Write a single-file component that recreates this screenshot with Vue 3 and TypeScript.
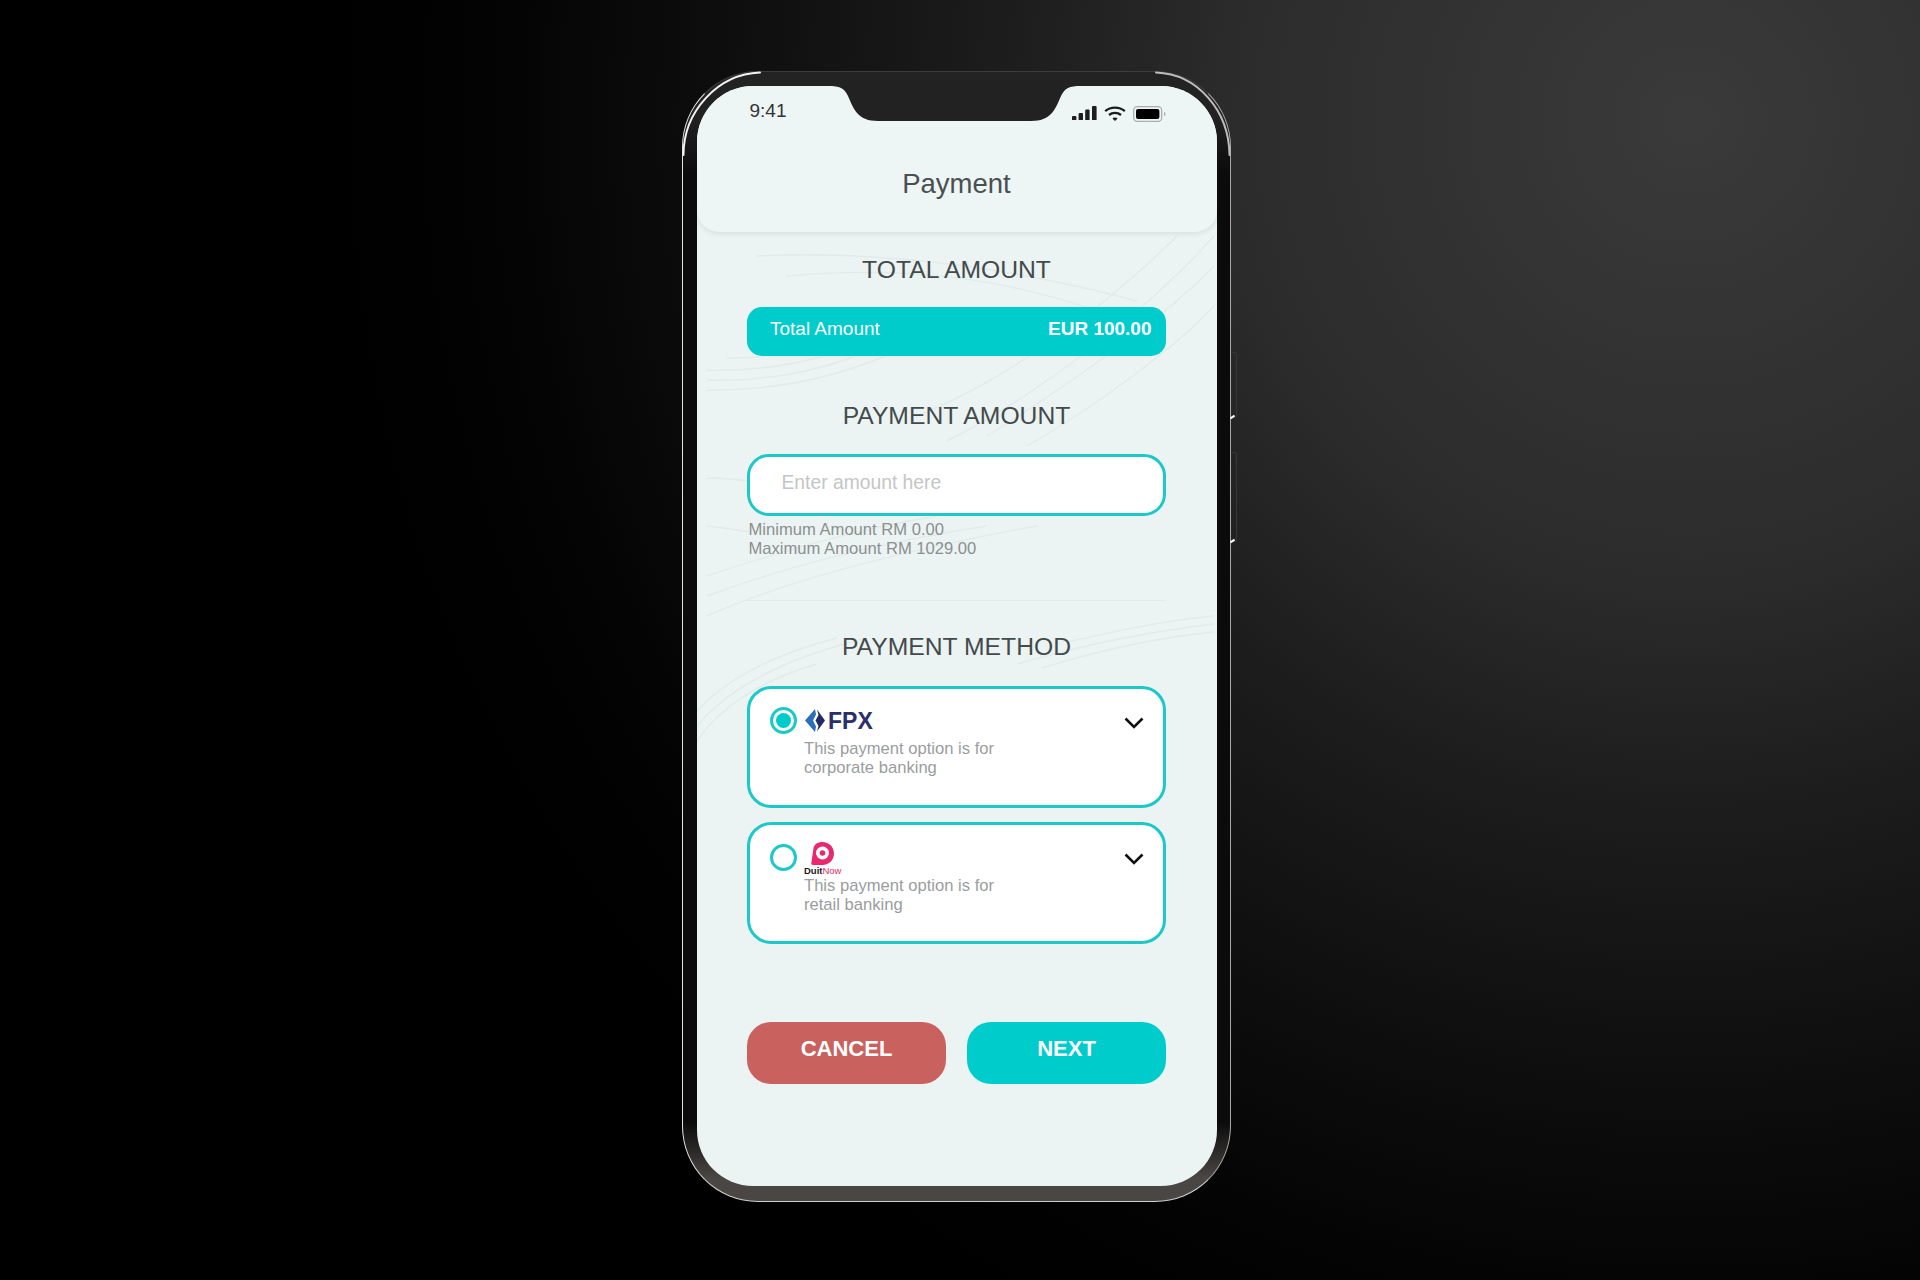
<script setup lang="ts">
interface Method { id: string; lines: string[]; selected: boolean }
const methods: Method[] = [
  { id: 'fpx', lines: ['This payment option is for', 'corporate banking'], selected: true },
  { id: 'duitnow', lines: ['This payment option is for', 'retail banking'], selected: false },
]
</script>

<template>
  <div class="page">
    <div class="phone">
      <span class="side side-a"></span>
      <span class="side side-b"></span>
      <svg class="shine" width="549" height="1131" viewBox="0 0 549 1131" fill="none" stroke-linecap="round">
        <path d="M1.500 84C1.500 40 36 3 78 1.500" stroke="#f2f2f2" stroke-width="2" />
        <path d="M474 1.500C516 3 547 40 547.500 84" stroke="#bdbdbd" stroke-width="2" />
      </svg>
      <div class="screen">
        <svg class="waves" viewBox="0 0 520 1100" fill="none" stroke="#e1ebea" stroke-width="1.4">
          <path d="M10 304C80 305 150 290 215 258" />
          <path d="M10 294C80 296 140 282 200 252" />
          <path d="M10 284C70 286 130 274 185 248" />
          <path d="M30 272C80 272 120 264 165 245" />
          <path d="M250 355C340 310 450 225 517 150" />
          <path d="M290 350C370 300 470 230 517 180" />
          <path d="M220 330C320 290 420 210 480 150" />
          <path d="M330 360C400 320 480 260 517 220" />
          <path d="M10 530C100 490 230 460 340 440" />
          <path d="M10 510C90 480 190 455 290 440" />
          <path d="M10 490C70 470 150 445 240 430" />
          <path d="M517 538C460 545 400 555 320 578" />
          <path d="M517 546C460 552 410 562 345 582" />
          <path d="M517 530C470 534 420 545 370 556" />
          <path d="M0 640C28 606 80 574 170 552" />
          <path d="M0 625C28 595 70 570 140 552" />
          <path d="M0 655C20 625 60 595 120 578" />
          <path d="M10 392C30 392 40 394 52 395" />
          <path d="M10 440C30 442 40 444 52 446" />
          <path d="M60 170C160 165 290 175 440 215" />
          <path d="M90 190C200 180 300 190 400 225" />
        </svg>

        <header class="head">
          <div class="status">
            <span class="clock">9:41</span>
            <div class="status-icons">
              <svg width="25" height="14" viewBox="0 0 25 14" fill="#1d1d1d">
                <rect x="0" y="10" width="4.4" height="4.4" rx="1" />
                <rect x="6.6" y="7" width="4.4" height="7.4" rx="1" />
                <rect x="13.2" y="3.6" width="4.4" height="10.8" rx="1" />
                <rect x="20" y="0" width="4.6" height="14.4" rx="1" />
              </svg>
              <svg width="22" height="15" viewBox="0 0 22 15" fill="none" stroke="#1d1d1d" stroke-width="2.3">
                <path d="M1.2 5.2C6.6 0.4 15.4 0.4 20.8 5.2" />
                <path d="M5 9C8.4 6.2 13.6 6.2 17 9" />
                <path d="M8.4 12.4L11 15L13.6 12.4C12.2 11.2 9.8 11.2 8.4 12.4Z" fill="#1d1d1d" stroke="none" />
              </svg>
              <svg width="33" height="16" viewBox="0 0 33 16">
                <rect x="0.7" y="0.7" width="28" height="14.6" rx="3.5" fill="none" stroke="#a9aeae" stroke-width="1.3" />
                <rect x="3" y="3" width="23.4" height="10" rx="2" fill="#000" />
                <path d="M31 6V10C32 9.600 32.500 8.800 32.500 8C32.500 7.200 32 6.400 31 6Z" fill="#a9aeae" />
              </svg>
            </div>
          </div>
          <h1 class="title">Payment</h1>
        </header>
        <svg class="notch" width="253" height="35" viewBox="0 0 253 35">
          <path d="M0 0C12 0 16 2 20 10C26 24 30 35 50 35H203C223 35 227 24 233 10C237 2 241 0 253 0Z" fill="#222" />
        </svg>

        <main class="body">
          <h2 class="label first">TOTAL AMOUNT</h2>
          <div class="total">
            <span>Total Amount</span>
            <strong>EUR 100.00</strong>
          </div>

          <h2 class="label second">PAYMENT AMOUNT</h2>
          <input class="amount" type="text" placeholder="Enter amount here" />
          <p class="hint">Minimum Amount RM 0.00<br />Maximum Amount RM 1029.00</p>
          <hr class="rule" />

          <h2 class="label third">PAYMENT METHOD</h2>
          <div class="methods">
            <section v-for="m in methods" :key="m.id" class="card">
              <span class="radio" :class="{ on: m.selected }"></span>
              <div class="card-body">
                <div v-if="m.id === 'fpx'" class="logo fpx">
                  <svg width="20" height="23" viewBox="0 0 20 23">
                    <path d="M10 0L0 11.500L10 23L11 17.500L8 11.500L11 5.500Z" fill="#2a6fb8" />
                    <path d="M12 0.500L20 11.500L12 22.500L13.500 17L10.500 11.500L13.500 6Z" fill="#232b66" />
                  </svg>
                  <span class="fpx-text">FPX</span>
                </div>
                <div v-else class="logo duit">
                  <svg width="23" height="24" viewBox="0 0 23 24">
                    <path d="M2.500 6C3.500 2 7 0 11.500 0C18 0 23 5 23 11.500C23 18 18 23 11.500 23H2C0.600 23 0 22 0.400 20.500Z" fill="#e9296f" />
                    <circle cx="11.500" cy="11" r="6.500" fill="#fff" />
                    <circle cx="11.500" cy="11" r="2.800" fill="#e9296f" />
                  </svg>
                  <span class="duit-text">Duit<em>Now</em></span>
                </div>
                <p class="desc">{{ m.lines[0] }}<br />{{ m.lines[1] }}</p>
              </div>
              <svg class="chev" width="20" height="12" viewBox="0 0 20 12" fill="none" stroke="#111" stroke-width="2.600">
                <path d="M1.500 1.500L10 10L18.500 1.500" />
              </svg>
            </section>
          </div>

          <div class="actions">
            <button class="btn cancel" type="button">CANCEL</button>
            <button class="btn next" type="button">NEXT</button>
          </div>
        </main>
      </div>
    </div>
  </div>
</template>

<style>
html, body { background: #000; }
</style>

<style scoped>
.page {
  width: 1920px;
  height: 1280px;
  box-sizing: border-box;
  display: flex;
  justify-content: center;
  align-items: flex-start;
  padding: 71px 7px 0 0;
  overflow: hidden;
  font-family: "Liberation Sans", Arial, sans-serif;
  background: radial-gradient(circle 1350px at 1690px 120px, #3a3a3a 0, #2c2c2c 450px, #1d1d1d 680px, #0d0d0d 980px, #030303 1200px, #000 1350px);
}
.phone {
  position: relative;
  flex: none;
  box-sizing: border-box;
  width: 549px;
  height: 1131px;
  padding: 13.5px 12.5px 14.5px 13.5px;
  border: 1.5px solid;
  border-color: #3c3c3c #a8a8a8 #cfcfcf #e4e4e4;
  border-radius: 76px;
  background: linear-gradient(#232323 0, #222 4%, #0b0b0b 9%, #0b0b0b 93%, #4a4644 98%, #4a4644 100%);
}
.shine {
  position: absolute;
  top: -1.5px;
  left: -1.5px;
}
.side {
  position: absolute;
  left: 100%;
  width: 4px;
  margin-left: 2px;
  border: 1px solid #363636;
  border-left: 0;
  border-radius: 0 2px 2px 0;
}
.side::after {
  content: "";
  position: absolute;
  left: -2px;
  bottom: -1px;
  width: 5px;
  height: 2px;
  background: #fff;
  transform: rotate(-35deg);
}
.side-a { top: 280px; height: 64px; }
.side-b { top: 380px; height: 88px; }
.screen {
  position: relative;
  width: 520px;
  height: 1100px;
  border-radius: 56px;
  overflow: hidden;
  background: #ebf4f3;
  color: #444a4b;
}
.waves {
  position: absolute;
  inset: 0;
  width: 520px;
  height: 1100px;
  filter: blur(0.6px);
}
.notch {
  position: absolute;
  top: 0;
  left: 131px;
}
.head {
  position: relative;
  height: 146px;
  box-sizing: border-box;
  border-radius: 0 0 22px 22px;
  background: #eef6f5;
  box-shadow: 0 2px 5px rgba(40, 60, 60, 0.1);
}
.status {
  display: flex;
  justify-content: space-between;
  padding: 14px 51px 0 53px;
}
.clock {
  font-size: 19px;
  line-height: 22px;
  color: #333;
}
.status-icons {
  display: flex;
  align-items: flex-start;
  gap: 7px;
  margin-top: 6px;
}
.title {
  margin: 46.5px 0 0;
  font-size: 27.5px;
  line-height: 32px;
  font-weight: 400;
  text-align: center;
  color: #4a4f50;
}
.body {
  position: relative;
  padding: 0 51px 0 50px;
}
.label {
  margin: 0;
  height: 30px;
  padding-left: 1px;
  font-size: 24.7px;
  line-height: 30px;
  font-weight: 400;
  text-align: center;
  color: #444a4b;
}
.first { margin: 23px 0 22px; }
.second { margin: 45px 0 23px; }
.third { margin: 31px 0 24px; }
.total {
  display: flex;
  justify-content: space-between;
  align-items: center;
  height: 49px;
  box-sizing: border-box;
  padding: 0 14px 5px 23.5px;
  border-radius: 15px;
  background: #00cccc;
  color: #fff;
  font-size: 19px;
}
.amount {
  display: block;
  width: 100%;
  height: 62px;
  box-sizing: border-box;
  padding: 0 20px 3px 32px;
  border: 3px solid #1cc8c8;
  border-radius: 22px;
  background: #fff;
  outline: none;
  font-family: inherit;
  font-size: 19.3px;
}
.amount::placeholder { color: #c3c6c6; opacity: 1; }
.hint {
  margin: 4px 0 0 2px;
  font-size: 16.6px;
  line-height: 19px;
  color: #8b8f8f;
}
.rule {
  margin: 42px 0 0;
  border: 0;
  border-top: 1px solid #e3eceb;
}
.methods {
  display: flex;
  flex-direction: column;
  gap: 14px;
}
.card {
  display: flex;
  height: 122px;
  box-sizing: border-box;
  padding: 18px 19px 0 20px;
  border: 3px solid #1cc8c8;
  border-radius: 24px;
  background: #fff;
}
.radio {
  flex: none;
  display: flex;
  align-items: center;
  justify-content: center;
  width: 27px;
  height: 27px;
  box-sizing: border-box;
  margin-top: 0.500px;
  border: 3px solid #1cc8c8;
  border-radius: 50%;
}
.radio.on::before {
  content: "";
  width: 15px;
  height: 15px;
  border-radius: 50%;
  background: #00cccc;
}
.card:last-child .radio { margin-top: 1.500px; }
.card-body {
  flex: 1;
  margin-left: 7.500px;
}
.logo {
  height: 31px;
}
.fpx {
  display: flex;
  align-items: flex-start;
  gap: 3px;
  padding-left: 1px;
  margin-top: 2px;
  height: 30px;
}
.fpx-text {
  font-size: 23px;
  line-height: 24px;
  font-weight: 700;
  color: #2a2f6b;
}
.duit {
  position: relative;
  margin-top: -1px;
  height: 34px;
  padding-left: 7px;
}
.duit svg { display: block; }
.duit-text {
  position: absolute;
  left: 0;
  top: 24px;
  font-size: 9.500px;
  line-height: 10px;
  font-weight: 700;
  color: #1a1a1a;
  white-space: nowrap;
}
.duit-text em {
  font-style: normal;
  font-weight: 400;
  color: #e9296f;
}
.desc {
  margin: 0;
  font-size: 16.6px;
  line-height: 19px;
  color: #9a9d9e;
}
.chev {
  flex: none;
  margin-top: 10px;
}
.actions {
  display: flex;
  gap: 21px;
  margin-top: 78px;
}
.btn {
  flex: 1;
  height: 62px;
  padding: 0 0 8px 1px;
  border: 0;
  border-radius: 24px;
  color: #fff;
  font-family: inherit;
  font-size: 22px;
  font-weight: 700;
}
.cancel { background: #c9615e; }
.next { background: #00cccc; }
</style>
